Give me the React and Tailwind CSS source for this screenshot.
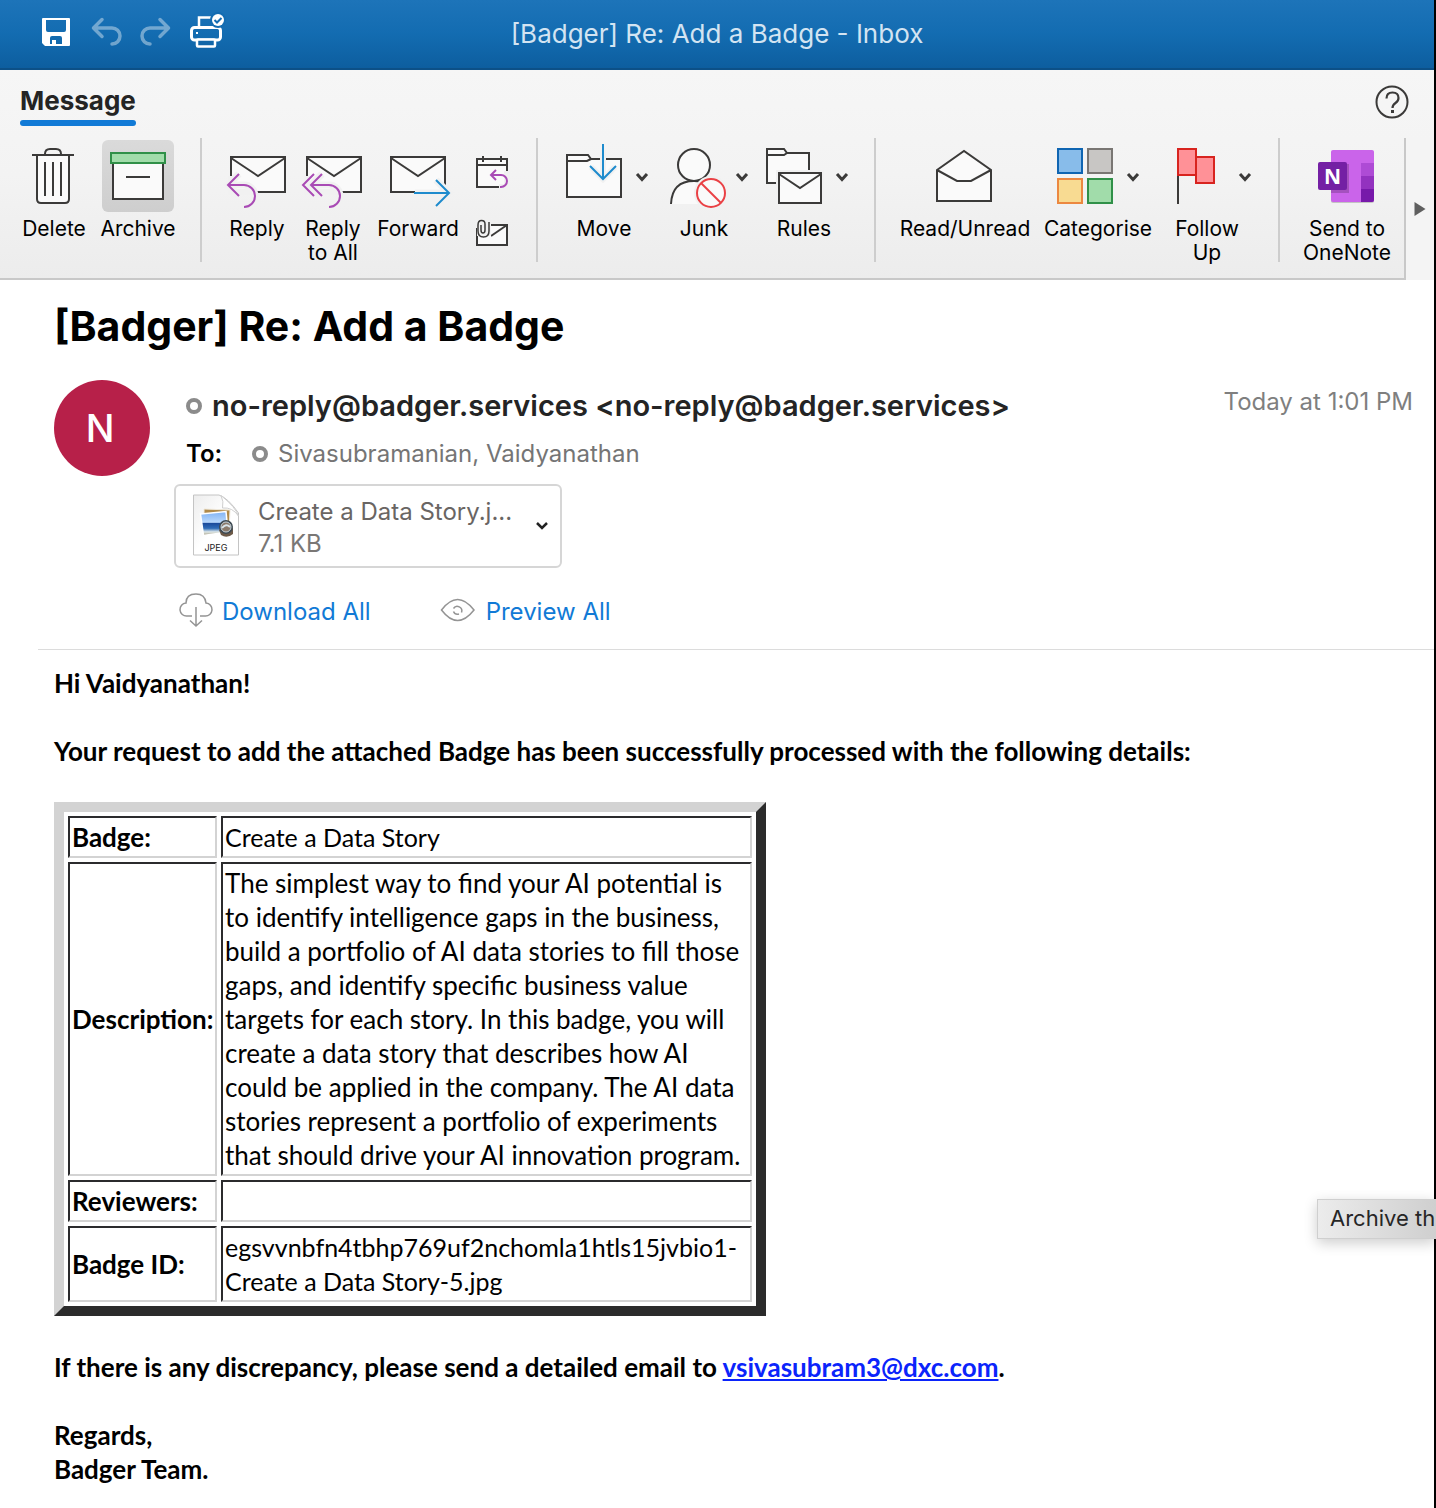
import React from "react";

const INK = "#3b3a39";
const PAPER = "#fafafa";
const HALO = "#f1f1f1";
const PURPLE = "#a94bb5";
const BLUE = "#1e8bcd";

function Icon({ box, className, children }) {
  return (
    <svg viewBox={box} className={className} fill="none" stroke={INK} strokeWidth="2" aria-hidden="true">
      {children}
    </svg>
  );
}

function Chevron({ x, y = 177 }) {
  return <path d={`M${x - 5} ${y - 3}l5 5.5l5 -5.5`} strokeWidth="3" />;
}

function Envelope({ x, y, w, h, dip }) {
  return (
    <>
      <rect x={x} y={y} width={w} height={h} fill={PAPER} />
      <path d={`M${x} ${y + 1}L${x + w / 2} ${y + dip}L${x + w} ${y + 1}`} />
    </>
  );
}

function RibbonButton({ icon, label, className }) {
  return (
    <button type="button" className={`flex shrink-0 flex-col items-center ${className}`}>
      {icon}
      <span className="mt-[5px] text-[21px] leading-6 whitespace-pre text-black">{label}</span>
    </button>
  );
}

function Separator() {
  return <div className="h-[124px] w-0.5 shrink-0 bg-[#cdcdcd]" />;
}

function TitleBar() {
  return (
    <header className="grid h-[70px] grid-cols-[1fr_auto_1fr] items-center border-b-2 border-[#0c5087] bg-linear-to-b from-[#1d74b9] via-[#136cb1] to-[#0d5e9f]">
      <div className="flex items-center pl-[40px]">
        <button type="button" aria-label="Save">
          <Icon box="40 16 32 36" className="h-9 w-8">
            <path fill="#fff" stroke="none" fillRule="evenodd" d="M43 18H69a1 1 0 0 1 1 1V45a1 1 0 0 1 -1 1H45l-3 -3V19a1 1 0 0 1 1 -1ZM46 20V30q0 2 2 2H64q2 0 2 -2V20ZM50 44H62V38q0 -2 -2 -2H52q-2 0 -2 2ZM52 40H56V44H52Z" />
          </Icon>
        </button>
        <button type="button" aria-label="Undo" className="ml-[18px] opacity-40">
          <Icon box="90 16 34 36" className="h-9 w-[34px]">
            <path stroke="#fff" strokeWidth="3.500" strokeLinecap="round" strokeLinejoin="round" d="M102 19.500L93.500 28L102 36.500M93.500 28H112a8 8 0 0 1 0 16" />
          </Icon>
        </button>
        <button type="button" aria-label="Redo" className="ml-[14px] opacity-40">
          <Icon box="138 16 34 36" className="h-9 w-[34px]">
            <path stroke="#fff" strokeWidth="3.500" strokeLinecap="round" strokeLinejoin="round" d="M160 19.500L168.500 28L160 36.500M168.500 28H150a8 8 0 0 0 0 16" />
          </Icon>
        </button>
        <button type="button" aria-label="Print" className="ml-4">
          <Icon box="188 12 38 44" className="h-11 w-[38px]">
            <g stroke="#fff" strokeWidth="2.500">
              <path d="M199 27V17.500H211" />
              <rect x="191.500" y="27.500" width="29" height="12.500" rx="3" strokeWidth="3" />
              <rect x="197" y="39.500" width="18" height="7" rx="1" fill="#1266a8" />
            </g>
            <path fill="#fff" stroke="none" d="M196 32h2v2h-2z" />
            <circle cx="218" cy="20" r="8" fill="#136cb1" stroke="none" />
            <circle cx="218" cy="20" r="6" fill="#fff" stroke="none" />
            <path stroke="#136cb1" d="M214.500 20l2.500 2.500l4.500 -4.500" />
          </Icon>
        </button>
      </div>
      <h1 className="text-[26px] leading-8 text-[#d3e4f2]">[Badger] Re: Add a Badge - Inbox</h1>
      <div />
    </header>
  );
}

const DeleteIcon = (
  <Icon box="18 140 72 72" className="h-[72px] w-[72px]">
    <path fill={PAPER} d="M37 155V199q0 4 4 4H65q4 0 4 -4V155" />
    <path d="M32 155H74M45 154q0 -5 5 -5H56q5 0 5 5M45 162V196M53 162V196M61 162V196" />
  </Icon>
);

const ArchiveIcon = (
  <span className="rounded-md bg-linear-to-b from-[#dadada] to-[#cecece]">
    <Icon box="102 140 72 72" className="h-[72px] w-[72px]">
      <rect x="113" y="162" width="50" height="37" fill={PAPER} />
      <rect x="111" y="153" width="54" height="10" fill="#a1dcaa" stroke="#309048" />
      <path d="M126 177H150" />
    </Icon>
  </span>
);

const ReplyIcon = (
  <Icon box="221 140 72 72" className="h-[72px] w-[72px]">
    <Envelope x={231} y={157} w={54} h={35} dip={19} />
    <path stroke={HALO} strokeWidth="7" d="M239 174L228 185L239 196M228 185H244a11 11 0 0 1 0 22" />
    <path stroke={HALO} strokeWidth="6" d="M231 176V195M229 192H256" />
    <path stroke={PURPLE} d="M239 174L228 185L239 196M228 185H244a11 11 0 0 1 0 22" />
  </Icon>
);

const ReplyAllIcon = (
  <Icon box="297 140 72 72" className="h-[72px] w-[72px]">
    <Envelope x={307} y={157} w={54} h={35} dip={19} />
    <path stroke={HALO} strokeWidth="7" d="M322 174L311 185L322 196M311 185H329a11 11 0 0 1 0 22" />
    <path stroke={HALO} strokeWidth="6" d="M307 176V195M305 192H341" />
    <path stroke={PURPLE} d="M314 174L303 185L314 196M322 174L311 185L322 196M311 185H329a11 11 0 0 1 0 22" />
  </Icon>
);

const ForwardIcon = (
  <Icon box="373 140 90 72" className="h-[72px] w-[90px]">
    <Envelope x={391} y={157} w={54} h={35} dip={19} />
    <path stroke={HALO} strokeWidth="7" d="M415 193H449M436 180L449 193L436 206" />
    <path stroke={BLUE} d="M414 193H449M436 180L449 193L436 206" />
  </Icon>
);

const MeetingIcon = (
  <Icon box="476 154 34 36" className="h-9 w-[34px]">
    <rect x="477" y="159" width="30" height="28" fill={PAPER} />
    <path d="M477 165H507M483 156V162M501 156V162" />
    <path stroke={HALO} strokeWidth="6" d="M507 171V190M499 187H510" />
    <path stroke={PURPLE} d="M496 170L491 175L496 180M491 175H501a6 6 0 0 1 0 12H500" />
  </Icon>
);

const AttachMailIcon = (
  <Icon box="476 218 34 30" className="h-[30px] w-[34px]">
    <rect x="477" y="225" width="30" height="20" fill={PAPER} />
    <path d="M507 225L491 236" />
    <path stroke={HALO} strokeWidth="6" d="M476 225H491M480 223V233H488V223" />
    <path strokeWidth="1.500" d="M481 225V230q0 3 2 3t2 -3V224q0 -3.500 -3.500 -3.500t-3.500 4.500V231q0 6 5.500 6t5.500 -6V222" />
  </Icon>
);

const MoveIcon = (
  <Icon box="554 140 100 72" className="h-[72px] w-[100px]">
    <path fill={PAPER} d="M567 155H588L591 159H621V197H567Z" />
    <path d="M567 161H587L591 159" />
    <path stroke={HALO} strokeWidth="6" d="M603 150V178M591 167L603 179L615 167" />
    <path stroke={BLUE} d="M603 144V179M590 166L603 179L616 166" />
    <Chevron x={642} />
  </Icon>
);

const JunkIcon = (
  <Icon box="654 140 100 72" className="h-[72px] w-[100px]">
    <path fill={PAPER} d="M671 204q0 -23 23 -23L711 193L705 204" stroke="none" />
    <path d="M671 204q1 -23 23 -23q9 0 14 4" />
    <circle cx="694" cy="165" r="16" fill={PAPER} />
    <circle cx="711" cy="193" r="17" fill={HALO} stroke="none" />
    <circle cx="711" cy="193" r="14" stroke="#ea4145" fill={PAPER} />
    <path stroke="#ea4145" d="M701 183L721 203" />
    <Chevron x={742} />
  </Icon>
);

const RulesIcon = (
  <Icon box="754 140 100 72" className="h-[72px] w-[100px]">
    <path fill={PAPER} d="M767 149H784L787 153H809V183H767Z" />
    <path d="M767 155H784L787 153" />
    <rect x="776" y="170" width="48" height="36" fill={HALO} stroke="none" />
    <Envelope x={779} y={173} w={42} h={30} dip={15} />
    <Chevron x={842} />
  </Icon>
);

const ReadIcon = (
  <Icon box="895 140 140 72" className="h-[72px] w-[140px]">
    <path fill={PAPER} d="M937 170L964 151L991 170V201H937Z" />
    <path d="M937 170L957 181H971L991 170" />
  </Icon>
);

const CategoriseIcon = (
  <Icon box="1035 140 126 72" className="h-[72px] w-[126px]">
    <rect x="1058" y="149" width="24" height="24" fill="#88bcea" stroke="#0f65b2" />
    <rect x="1088" y="149" width="24" height="24" fill="#c8c6c4" stroke="#797673" />
    <rect x="1058" y="179" width="24" height="24" fill="#f8db92" stroke="#ec8840" />
    <rect x="1088" y="179" width="24" height="24" fill="#a1dcaa" stroke="#309048" />
    <Chevron x={1133} />
  </Icon>
);

const FollowUpIcon = (
  <Icon box="1161 140 92 72" className="h-[72px] w-[92px]">
    <path d="M1178 176V204" />
    <rect x="1196" y="157" width="18" height="26" fill="#ff9197" stroke="#d8241f" />
    <rect x="1178" y="149" width="18" height="26" fill="#ff9197" stroke="#d8241f" />
    <Chevron x={1245} />
  </Icon>
);

const OneNoteIcon = (
  <Icon box="1290 140 114 72" className="h-[72px] w-[114px]">
    <g stroke="none">
      <rect x="1331" y="151" width="43" height="52" rx="2" fill="#00000030" />
      <rect x="1331" y="150" width="43" height="52" rx="2" fill="#ca64ea" />
      <path fill="#ae4bd5" d="M1361 163h13v13h-13z" />
      <path fill="#9332bf" d="M1361 176h13v13h-13z" />
      <path fill="#7719aa" d="M1361 189h13v11q0 2 -2 2h-11z" />
      <path fill="#00000030" d="M1331 164H1349V193H1331Z" />
      <rect x="1318" y="162" width="29" height="28" rx="2" fill="#7420a4" />
      <text x="1332.500" y="183.500" textAnchor="middle" fill="#fff" className="font-['Open_Sans'] text-[21px] font-bold">N</text>
    </g>
  </Icon>
);

function Ribbon() {
  return (
    <nav aria-label="Message ribbon" className="bg-linear-to-b from-[#f6f6f6] via-[#f3f3f3] to-[#ececec]">
      <div className="flex h-[68px] items-start justify-between pr-[25px] pl-5">
        <button type="button" className="flex flex-col pt-4 text-[26px] leading-[30px] font-bold text-[#242424]">
          Message
          <span className="mt-1 h-1.5 w-full rounded-full bg-[#117ad6]" />
        </button>
        <button type="button" aria-label="Help" className="pt-[15px]">
          <Icon box="0 0 34 34" className="h-[34px] w-[34px]">
            <circle cx="17" cy="17" r="15.500" />
            <path strokeWidth="2.200" d="M11.500 13.500q0 -6 6 -6q6 0 6 5.500q0 3 -3 5q-3 2 -3 5" />
            <path fill={INK} stroke="none" d="M16 25h3v3h-3z" />
          </Icon>
        </button>
      </div>
      <div className="flex">
        <div className="flex h-[142px] flex-1 items-start border-r-2 border-b-2 border-[#c8c8c8]">
          <div className="flex items-start gap-3 pt-0.5 pr-[26px] pl-[18px]">
            <RibbonButton icon={DeleteIcon} label="Delete" className="w-[72px]" />
            <RibbonButton icon={ArchiveIcon} label="Archive" className="w-[72px]" />
          </div>
          <Separator />
          <div className="flex items-start gap-1 pt-0.5 pr-[26px] pl-[19px]">
            <RibbonButton icon={ReplyIcon} label="Reply" className="w-[72px]" />
            <RibbonButton icon={ReplyAllIcon} label={"Reply\nto All"} className="w-[72px]" />
            <RibbonButton icon={ForwardIcon} label="Forward" className="w-[90px]" />
            <div className="flex flex-col gap-7 pt-3.5 pl-[9px]">
              <button type="button" aria-label="Meeting">{MeetingIcon}</button>
              <button type="button" aria-label="Forward as attachment">{AttachMailIcon}</button>
            </div>
          </div>
          <Separator />
          <div className="flex items-start pt-0.5 pr-5 pl-4">
            <RibbonButton icon={MoveIcon} label="Move" className="w-[100px]" />
            <RibbonButton icon={JunkIcon} label="Junk" className="w-[100px]" />
            <RibbonButton icon={RulesIcon} label="Rules" className="w-[100px]" />
          </div>
          <Separator />
          <div className="flex items-start pt-0.5 pr-[25px] pl-[19px]">
            <RibbonButton icon={ReadIcon} label="Read/Unread" className="w-[140px]" />
            <RibbonButton icon={CategoriseIcon} label="Categorise" className="w-[126px]" />
            <RibbonButton icon={FollowUpIcon} label={"Follow\nUp"} className="w-[92px]" />
          </div>
          <Separator />
          <div className="flex items-start pt-0.5 pl-2.5">
            <RibbonButton icon={OneNoteIcon} label={"Send to\nOneNote"} className="w-[114px]" />
          </div>
        </div>
        <button type="button" aria-label="More commands" className="flex w-7 shrink-0 items-center justify-center bg-[#f4f4f4]">
          <svg viewBox="0 0 12 14" className="h-3.5 w-3" fill="#5f5f5f" aria-hidden="true">
            <path d="M0.500 0L11.500 7L0.500 14Z" />
          </svg>
        </button>
      </div>
    </nav>
  );
}

function Presence() {
  return <span className="h-4 w-4 shrink-0 rounded-full border-4 border-[#8b8b8b]" />;
}

function JpegIcon() {
  return (
    <svg viewBox="190 493 52 66" className="h-[66px] w-[52px] shrink-0" aria-hidden="true">
      <defs>
        <linearGradient id="page" x1="0" y1="0" x2="1" y2="1">
          <stop offset="0" stopColor="#ededed" />
          <stop offset="0.500" stopColor="#fff" />
        </linearGradient>
        <linearGradient id="sea" x1="0" y1="0" x2="0" y2="1">
          <stop offset="0" stopColor="#7fb2f5" />
          <stop offset="0.450" stopColor="#b9d8fb" />
          <stop offset="0.500" stopColor="#1c4c9c" />
          <stop offset="0.700" stopColor="#2f6cb8" />
          <stop offset="0.850" stopColor="#dfe8e8" />
          <stop offset="1" stopColor="#a39a7e" />
        </linearGradient>
      </defs>
      <path d="M193.500 495H219q9 3 19.500 18V555H193.500Z" fill="url(#page)" stroke="#c4c4c4" />
      <path d="M221 495.500q3 6 1.500 12.500q10 -1 16 8q-3 -9 -17.500 -20.500Z" fill="#fff" stroke="#cfcfcf" />
      <path d="M204 509L230 510L229 531L204 530Z" fill="#b08a4a" stroke="#efe9dc" />
      <path d="M200.500 514L226 511.500L228 532L203.500 535.500Z" fill="url(#sea)" stroke="#fff" strokeWidth="1.500" />
      <path d="M219 530L233 528V534q-6 5 -12 1Z" fill="#6d5a48" />
      <circle cx="226" cy="527" r="6" fill="#8b7a6b" stroke="#3f4a52" strokeWidth="2" />
      <circle cx="226" cy="527" r="5" fill="none" stroke="#c4d2da" strokeWidth="1" />
      <path d="M222 528q4 -5 8 -1" stroke="#d9e4ea" strokeWidth="2" fill="none" />
      <text x="216" y="551" textAnchor="middle" fill="#222" className="font-['Inter'] text-[9px]">JPEG</text>
    </svg>
  );
}

function MessageHeader() {
  return (
    <section className="ml-[38px] border-b border-[#dcdcdc] pt-5 pr-[21px] pb-[17px] pl-4">
      <h2 className="text-[41px] leading-[52px] font-bold text-black">[Badger] Re: Add a Badge</h2>
      <div className="mt-7 flex items-start">
        <div className="flex h-24 w-24 shrink-0 items-center justify-center rounded-full bg-[#b72049] pr-1 text-[38px] font-medium text-white">N</div>
        <div className="ml-6 flex min-w-0 flex-1 flex-col items-start">
          <div className="flex h-[52px] items-center gap-2.5 pl-3">
            <Presence />
            <span className="text-[29px] leading-9 font-semibold whitespace-nowrap text-[#242424]">no-reply@badger.services &lt;no-reply@badger.services&gt;</span>
          </div>
          <div className="flex h-11 items-center pl-3 text-[24px]">
            <span className="w-[66px] font-semibold text-black">To:</span>
            <Presence />
            <span className="ml-2.5 whitespace-nowrap text-[#757575]">Sivasubramanian, Vaidyanathan</span>
          </div>
          <button type="button" className="mt-2 flex h-[84px] w-[388px] items-center rounded-md border-2 border-[#d6d6d6] pl-3.5 text-left">
            <JpegIcon />
            <span className="ml-4 flex w-[276px] flex-col pt-1 text-[24px] leading-8 text-[#696563]">
              <span>Create a Data Story.j...</span>
              <span className="text-[#7a7775]">7.1 KB</span>
            </span>
            <Icon box="0 0 16 12" className="h-3 w-4 shrink-0">
              <path d="M3 3l5 5l5 -5" stroke="#222" strokeWidth="2.500" />
            </Icon>
          </button>
          <div className="mt-6 flex h-10 items-center text-[24px] text-[#117ad6]">
            <button type="button" className="flex items-center">
              <Icon box="178 592 36 40" className="mr-2 ml-1 h-10 w-9">
                <g stroke="#949494" strokeWidth="1.500">
                  <path d="M192 616H187a6.500 6.500 0 0 1 -1 -13q0 -9 10 -9q9 0 10 9a6.500 6.500 0 0 1 -1 13H200" />
                  <path d="M196 607V626M190 620.500L196 626L202 620.500" />
                </g>
              </Icon>
              Download All
            </button>
            <button type="button" className="ml-[69px] flex items-center">
              <Icon box="440 598 36 28" className="mr-2.5 h-7 w-9">
                <g stroke="#949494" strokeWidth="1.500">
                  <path d="M441.500 610q16 -21 32.500 0q-16.500 21 -32.500 0Z" />
                  <path d="M453.500 608.500A4.500 4.500 0 0 1 461.500 612.500M453.500 611.500A4.500 4.500 0 0 0 459 614" />
                </g>
              </Icon>
              Preview All
            </button>
          </div>
        </div>
        <time className="pt-1.5 text-[24px] leading-8 whitespace-nowrap text-[#7f7f7f]">Today at 1:01 PM</time>
      </div>
    </section>
  );
}

const DESCRIPTION = [
  "The simplest way to find your AI potential is",
  "to identify intelligence gaps in the business,",
  "build a portfolio of AI data stories to fill those",
  "gaps, and identify specific business value",
  "targets for each story. In this badge, you will",
  "create a data story that describes how AI",
  "could be applied in the company. The AI data",
  "stories represent a portfolio of experiments",
  "that should drive your AI innovation program.",
].join("\n");

const ROWS = [
  { name: "Badge:", value: "Create a Data Story", size: "text-[25px]" },
  { name: "Description:", value: DESCRIPTION, size: "text-[26px]" },
  { name: "Reviewers:", value: "\u00a0", size: "text-[25px]" },
  { name: "Badge ID:", value: "egsvvnbfn4tbhp769uf2nchomla1htls15jvbio1-\nCreate a Data Story-5.jpg", size: "text-[25px]" },
];

const CELL = "border-2 border-t-[#2b2b2d] border-r-[#d3d3d3] border-b-[#d3d3d3] border-l-[#2b2b2d] p-0.5 leading-[34px] whitespace-pre";

function MessageBody() {
  return (
    <article className="px-[54px] pt-4 font-['Lato',sans-serif] text-[26px] leading-[34px] text-black">
      <p className="font-bold">Hi Vaidyanathan!</p>
      <p className="mt-[34px] font-bold">Your request to add the attached Badge has been successfully processed with the following details:</p>
      <table className="my-[34px] w-[712px] table-fixed border-separate border-spacing-1 border-10 border-t-[#d3d3d3] border-r-[#2b2b2b] border-b-[#2b2b2b] border-l-[#d3d3d3]">
        <colgroup>
          <col className="w-[149px]" />
          <col />
        </colgroup>
        <tbody>
          {ROWS.map(({ name, value, size }) => (
            <tr key={name}>
              <th scope="row" className={`${CELL} text-left font-bold`}>{name}</th>
              <td className={`${CELL} ${size}`}>{value}</td>
            </tr>
          ))}
        </tbody>
      </table>
      <p className="font-bold">
        If there is any discrepancy, please send a detailed email to{" "}
        <a href="mailto:vsivasubram3@dxc.com" className="text-[#0b24fb] underline">vsivasubram3@dxc.com</a>.
      </p>
      <p className="mt-[34px] font-bold">Regards,</p>
      <p className="font-bold">Badger Team.</p>
    </article>
  );
}

export default function App() {
  return (
    <div className="relative overflow-hidden font-['Inter',sans-serif]">
      <main className="min-h-screen border-r-2 border-black bg-white">
        <TitleBar />
        <Ribbon />
        <MessageHeader />
        <MessageBody />
      </main>
      <div role="tooltip" className="absolute top-[1199px] right-0 h-10 w-[119px] border border-r-0 border-[#cfcfcf] bg-linear-to-r from-[#ececec] to-[#cfcfcf] pl-3 text-[22px] leading-9 whitespace-nowrap text-[#262626] shadow-[0_4px_14px_rgba(0,0,0,0.2)]">
        Archive th
      </div>
    </div>
  );
}
